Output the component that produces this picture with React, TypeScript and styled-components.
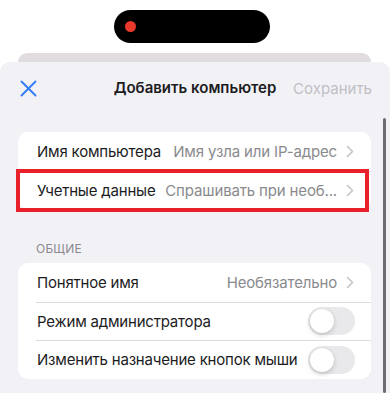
import React, { useState } from 'react';
import styled, { createGlobalStyle } from 'styled-components';

const GlobalStyle = createGlobalStyle`
    html, body {
        margin: 0;
        padding: 0;
        background: #ffffff;
        font-family: Inter, "Liberation Sans", Arial, sans-serif;
        -webkit-font-smoothing: antialiased;
    }
    * {
        box-sizing: border-box;
    }
`;

type Row = {
    label: string;
    value?: string;
    toggle?: boolean;
    marked?: boolean;
};

const connectionRows: Row[] = [
    { label: 'Имя компьютера', value: 'Имя узла или IP-адрес' },
    { label: 'Учетные данные', value: 'Спрашивать при необ...', marked: true },
];

const generalRows: Row[] = [
    { label: 'Понятное имя', value: 'Необязательно' },
    { label: 'Режим администратора', toggle: true },
    { label: 'Изменить назначение кнопок мыши', toggle: true },
];

const Chevron = () => (
    <svg width="8" height="13" viewBox="0 0 8 13" fill="none">
        <path d="M1.5 1.5L6.5 6.5L1.5 11.5" stroke="#c4c4c7" strokeWidth="1.6" strokeLinecap="round" strokeLinejoin="round" />
    </svg>
);

const CloseIcon = () => (
    <svg width="17" height="17" viewBox="0 0 17 17" fill="none">
        <path d="M1.5 1.5L15.5 15.5M15.5 1.5L1.5 15.5" stroke="#2f7cf6" strokeWidth="1.8" strokeLinecap="round" />
    </svg>
);

const App = (): JSX.Element => {
    const [toggles, setToggles] = useState<Record<string, boolean>>({});

    const renderRows = (rows: Row[]) =>
        rows.map((row, i) => (
            <ListRow key={row.label} $first={i === 0}>
                <RowLabel>{row.label}</RowLabel>
                {row.value && (
                    <RowValue>
                        <span>{row.value}</span>
                        <Chevron />
                    </RowValue>
                )}
                {row.toggle && (
                    <Toggle
                        $on={!!toggles[row.label]}
                        onClick={() => setToggles({ ...toggles, [row.label]: !toggles[row.label] })}
                    >
                        <Knob $on={!!toggles[row.label]} />
                    </Toggle>
                )}
                {row.marked && <Highlight />}
            </ListRow>
        ));

    return (
        <Screen>
            <GlobalStyle />
            <StatusArea>
                <Island>
                    <RecDot />
                </Island>
            </StatusArea>
            <BackCard />
            <Sheet>
                <NavBar>
                    <NavButton aria-label="close">
                        <CloseIcon />
                    </NavButton>
                    <NavTitle>Добавить компьютер</NavTitle>
                    <SaveButton>Сохранить</SaveButton>
                </NavBar>
                <Content>
                    <Group>{renderRows(connectionRows)}</Group>
                    <SectionLabel>ОБЩИЕ</SectionLabel>
                    <Group>{renderRows(generalRows)}</Group>
                </Content>
                <ScrollBar />
            </Sheet>
        </Screen>
    );
};

const Screen = styled.div`
    width: 390px;
    height: 393px;
    overflow: hidden;
    display: flex;
    flex-direction: column;
    background: #ffffff;
`;

const StatusArea = styled.div`
    height: 53px;
    display: flex;
    justify-content: center;
    padding-top: 10px;
    padding-right: 6px;
`;

const Island = styled.div`
    width: 156px;
    height: 33px;
    border-radius: 17px;
    background: #000;
    display: flex;
    align-items: center;
    padding-left: 11px;
`;

const RecDot = styled.div`
    width: 11px;
    height: 11px;
    border-radius: 50%;
    background: #e8392b;
`;

const BackCard = styled.div`
    height: 9px;
    margin: 0 19px 0 18px;
    background: #e0dcdf;
    border-radius: 10px 10px 0 0;
`;

const Sheet = styled.div`
    position: relative;
    flex: 1;
    background: #f2f1f6;
    border-radius: 10px 10px 0 0;
`;

const NavBar = styled.div`
    height: 52px;
    display: flex;
    align-items: center;
    justify-content: space-between;
    padding: 0 18px 0 19px;
`;

const NavButton = styled.button`
    border: none;
    background: none;
    padding: 0;
    display: flex;
    align-items: center;
    margin-left: 1px;
    margin-top: 1px;
`;

const NavTitle = styled.div`
    position: absolute;
    left: 0;
    right: 0;
    top: 0;
    height: 52px;
    line-height: 52px;
    text-align: center;
    font-size: 15px;
    font-weight: 600;
    color: #1c1c1e;
    pointer-events: none;
`;

const SaveButton = styled.button`
    border: none;
    background: none;
    padding: 0;
    font-family: inherit;
    font-size: 15px;
    color: #c0bfc5;
`;

const Content = styled.div`
    padding: 18px 19px 0 18px;
`;

const Group = styled.div`
    background: #ffffff;
    border-radius: 10px;
`;

const ListRow = styled.div<{ $first: boolean }>`
    position: relative;
    height: 38.5px;
    margin-left: 18px;
    padding-right: 17px;
    display: flex;
    align-items: center;
    justify-content: space-between;
    border-top: ${(p) => (p.$first ? 'none' : '0.5px solid #dcdce0')};
`;

const RowLabel = styled.span`
    font-size: 15px;
    letter-spacing: -0.2px;
    color: #1c1c1e;
    white-space: nowrap;
    margin-left: 1px;
`;

const RowValue = styled.span`
    display: flex;
    align-items: center;
    gap: 9px;
    font-size: 15px;
    letter-spacing: -0.15px;
    color: #8a8a8e;
    white-space: nowrap;
`;

const Toggle = styled.div<{ $on: boolean }>`
    width: 47px;
    height: 28px;
    border-radius: 14px;
    margin-right: -1px;
    padding: 2px;
    background: ${(p) => (p.$on ? '#34c759' : '#e9e8eb')};
    display: flex;
    justify-content: ${(p) => (p.$on ? 'flex-end' : 'flex-start')};
    cursor: pointer;
`;

const Knob = styled.div<{ $on: boolean }>`
    width: 24px;
    height: 24px;
    border-radius: 50%;
    background: #ffffff;
    box-shadow: 0 2px 5px rgba(0, 0, 0, 0.18), 0 0 1px rgba(0, 0, 0, 0.1);
`;

const Highlight = styled.div`
    position: absolute;
    left: -20px;
    right: 2px;
    top: -3px;
    bottom: -3px;
    border: 4px solid #e8202a;
    pointer-events: none;
`;

const SectionLabel = styled.div`
    margin: 33px 0 7px 18px;
    font-size: 12px;
    line-height: 14px;
    color: #8a8a8e;
    letter-spacing: 0.2px;
`;

const ScrollBar = styled.div`
    position: absolute;
    right: 4px;
    top: 56px;
    bottom: 0;
    width: 3px;
    border-radius: 2px;
    background: #6e6e72;
`;

export default App;
